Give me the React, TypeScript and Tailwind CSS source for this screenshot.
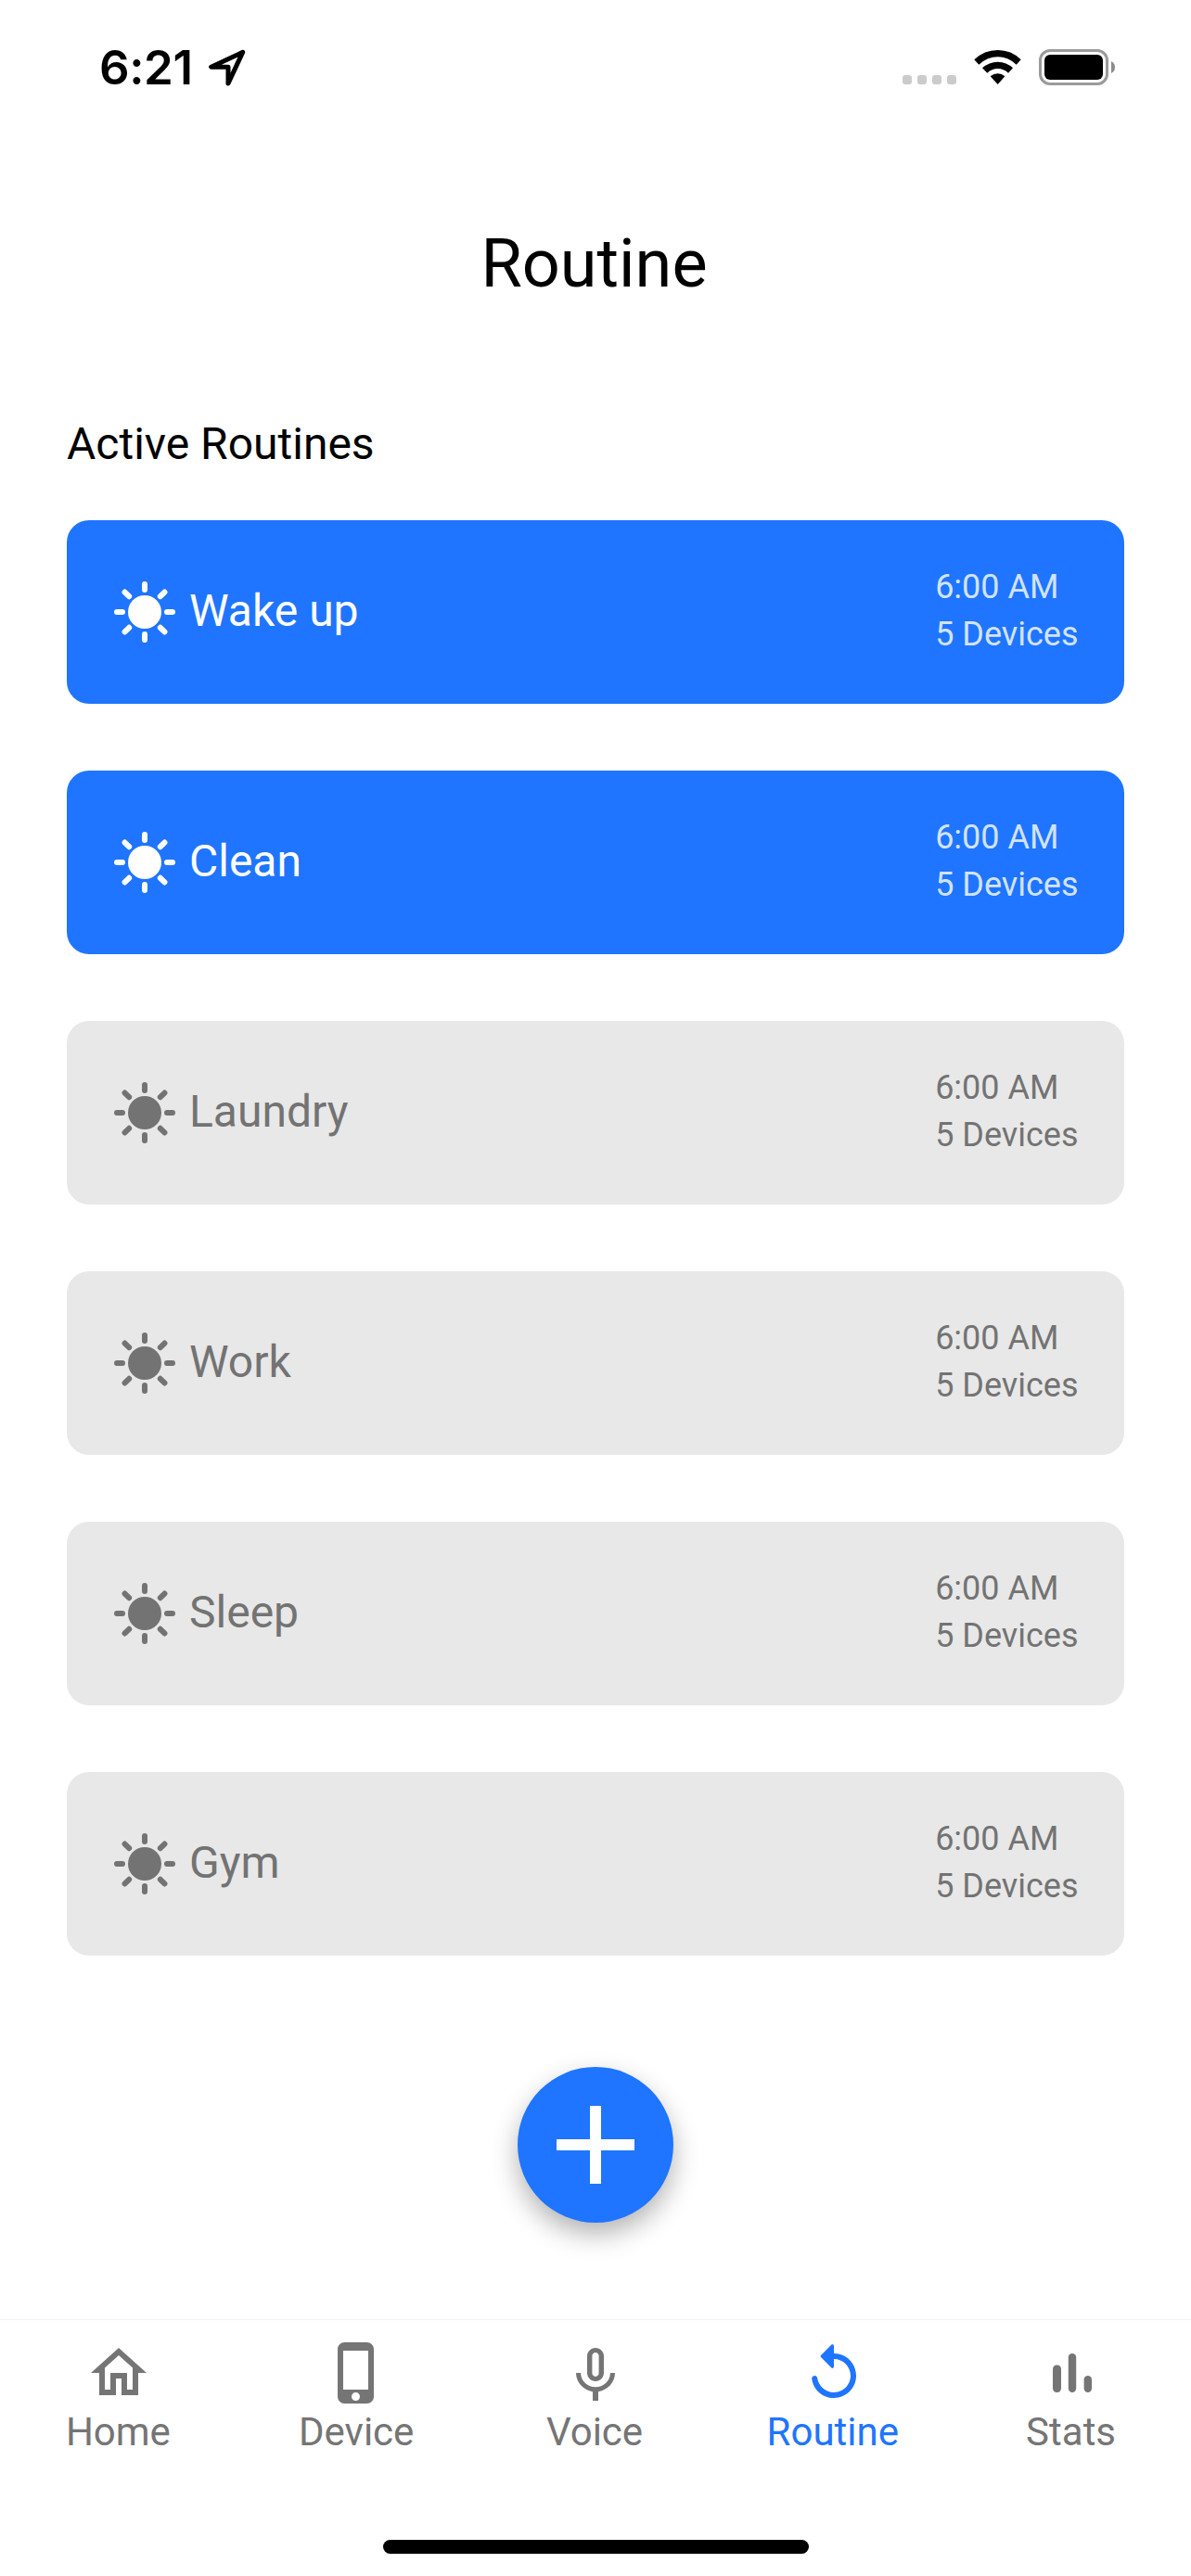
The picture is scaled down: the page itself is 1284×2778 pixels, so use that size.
import type { ReactNode } from "react";

const routines = [
  { name: "Wake up", active: true },
  { name: "Clean", active: true },
  { name: "Laundry", active: false },
  { name: "Work", active: false },
  { name: "Sleep", active: false },
  { name: "Gym", active: false },
];

function SunIcon() {
  return (
    <svg viewBox="0 0 24 24" className="size-[72px] shrink-0" fill="currentColor" stroke="currentColor">
      <circle cx="12" cy="12" r="6" stroke="none" />
      <path
        d="M12 2v2M12 20v2M2 12h2M20 12h2M4.85 4.85l1.55 1.55M17.6 17.6l1.55 1.55M4.85 19.15l1.55-1.55M17.6 6.4l1.55-1.55"
        strokeWidth="2"
        strokeLinecap="round"
      />
    </svg>
  );
}

function StatusBar() {
  return (
    <header className="flex h-[144px] items-start justify-between pt-[53px] pl-[107px] pr-[82px]">
      <div className="flex h-[40px] items-center">
        <span className="font-[Inter,sans-serif] text-[51px] leading-[40px] font-semibold tracking-[-0.4px]">6:21</span>
        <svg viewBox="432 69 120 120" className="ml-[17px] size-[40px]" fill="none" stroke="black" strokeWidth="15" strokeLinejoin="round">
          <path d="M542 79L440 126.500H495V180Z" />
        </svg>
      </div>
      <div className="flex h-[39px] items-start">
        <div className="mt-[28px] flex gap-[6px]">
          <span className="size-[10px] rounded-[3px] bg-[#cbcbcb]" />
          <span className="size-[10px] rounded-[3px] bg-[#cbcbcb]" />
          <span className="size-[10px] rounded-[3px] bg-[#cbcbcb]" />
          <span className="size-[10px] rounded-[3px] bg-[#cbcbcb]" />
        </div>
        <svg viewBox="300 69 153 117" className="ml-[19px] h-[39px] w-[51px]">
          <path d="M301 103Q333 72 377 72T452 103L437 119Q410 94 377 94T316 119Z" />
          <path d="M327 130Q349 110 377 110T426 130L411 146Q396 132 377 132T343 146Z" />
          <path d="M353 157Q364 148 377 148T400 157L377 183Z" />
        </svg>
        <div className="ml-[19px] h-[39px] w-[75px] rounded-[12px] border-[3px] border-[#9b9b9b] p-[3px]">
          <div className="h-[27px] w-[63px] rounded-[6px] bg-black" />
        </div>
        <svg viewBox="0 0 4 13" className="mt-[13px] ml-[3px] h-[13px] w-[4px]" fill="#8c8c8c">
          <path d="M0 0Q4 2 4 6.5T0 13Z" />
        </svg>
      </div>
    </header>
  );
}

function RoutineCard({ name, active }: { name: string; active: boolean }) {
  return (
    <li
      className={`flex h-[198px] items-center justify-between rounded-[24px] pl-[48px] pr-[49.5px] ${
        active ? "bg-[#1f75ff] text-white" : "bg-[#e8e8e8] text-[#737373]"
      }`}
    >
      <div className="flex items-center gap-3">
        <SunIcon />
        <span className="pb-[2px] text-[48px] leading-[56px]">{name}</span>
      </div>
      <div className={`pb-[3px] text-[36px] leading-[51px] ${active ? "text-[#d2e3ff]" : ""}`}>
        <p>6:00 AM</p>
        <p>5 Devices</p>
      </div>
    </li>
  );
}

function NavItem({ label, active, children }: { label: string; active?: boolean; children: ReactNode }) {
  return (
    <button className={`flex flex-1 flex-col items-center pt-[21px] ${active ? "text-[#1f75ff]" : "text-[#757575]"}`}>
      <svg viewBox="0 0 24 24" className="size-[72px]" fill="currentColor">
        {children}
      </svg>
      <span className="mt-[3px] pr-[2px] text-[42px] leading-[49px]">{label}</span>
    </button>
  );
}

export default function App() {
  return (
    <div className="flex h-[2778px] w-[1284px] flex-col bg-white font-[Roboto,sans-serif] text-black">
      <StatusBar />
      <main className="flex flex-1 flex-col px-[72px]">
        <h1 className="mt-[99px] pr-[3px] text-center text-[72px] leading-[84px]">Routine</h1>
        <h2 className="mt-[124px] text-[48px] leading-[56px]">Active Routines</h2>
        <ul className="mt-[54px] flex flex-col gap-[72px]">
          {routines.map((r) => (
            <RoutineCard key={r.name} name={r.name} active={r.active} />
          ))}
        </ul>
        <button
          aria-label="Add routine"
          className="mt-[120px] flex size-[168px] items-center justify-center self-center rounded-full bg-[#1f75ff] text-white shadow-[0_12px_28px_rgba(0,0,0,0.3)]"
        >
          <svg viewBox="0 0 14 14" className="size-[84px]" fill="currentColor">
            <path d="M6 0h2v6h6v2H8v6H6V8H0V6h6z" />
          </svg>
        </button>
      </main>
      <nav className="flex h-[238px] border-t border-[#f3f3f3]">
        <NavItem label="Home">
          <path d="M12 5.69l5 4.5V18h-2v-6H9v6H7v-7.81l5-4.5M12 3L2 12h3v8h6v-6h2v6h6v-8h3L12 3z" />
        </NavItem>
        <NavItem label="Device">
          <path d="M15.5 1h-8C6.12 1 5 2.12 5 3.5v17C5 21.88 6.12 23 7.5 23h8c1.38 0 2.5-1.12 2.5-2.5v-17C18 2.12 16.88 1 15.5 1zm-4 21c-.83 0-1.5-.67-1.5-1.5s.67-1.5 1.5-1.5 1.5.67 1.5 1.5-.67 1.5-1.5 1.5zm4.5-4H7V4h9v14z" />
        </NavItem>
        <NavItem label="Voice">
          <path
            transform="translate(0 1)"
            d="M12 14c1.66 0 2.99-1.34 2.99-3L15 5c0-1.66-1.34-3-3-3S9 3.34 9 5v6c0 1.66 1.34 3 3 3zm-1.2-9.1c0-.66.54-1.2 1.2-1.2s1.2.54 1.2 1.2l-.01 6.2c0 .66-.53 1.2-1.19 1.2s-1.2-.54-1.2-1.2V4.9zm6.5 6.1c0 3-2.54 5.1-5.3 5.1S6.7 14 6.7 11H5c0 3.41 2.72 6.23 6 6.72V21h2v-3.28c3.28-.48 6-3.3 6-6.72h-1.7z"
          />
        </NavItem>
        <NavItem label="Routine" active>
          <path d="M12 5V2.21c0-.45-.54-.67-.85-.35l-3.8 3.79c-.2.2-.2.51 0 .71l3.79 3.79c.32.31.86.09.86-.36V7c3.73 0 6.68 3.42 5.86 7.29-.47 2.27-2.31 4.1-4.57 4.57-3.57.75-6.75-1.7-7.23-5.01-.07-.48-.49-.85-.98-.85-.6 0-1.08.53-1 1.13.62 4.39 4.8 7.64 9.53 6.72 3.12-.61 5.63-3.12 6.24-6.24C20.84 9.48 16.94 5 12 5z" />
        </NavItem>
        <NavItem label="Stats">
          <rect x="5" y="9.2" width="3" height="9.8" rx="1.4" />
          <rect x="10.6" y="5" width="2.8" height="14" rx="1.4" />
          <rect x="16.2" y="13" width="2.8" height="6" rx="1.4" />
        </NavItem>
      </nav>
      <div className="mb-[24px] h-[15px] w-[459px] self-center rounded-full bg-black" />
    </div>
  );
}
